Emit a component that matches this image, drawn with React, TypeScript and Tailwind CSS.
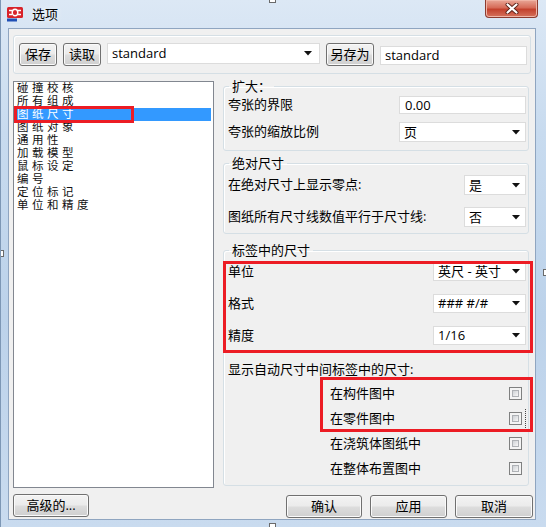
import React from "react";

const FONT = "font-[family-name:'Open_Sans','Noto_Sans_CJK_SC',sans-serif]";

function Arrow() {
  return (
    <svg width="8" height="5" viewBox="0 0 8 5" className="shrink-0">
      <polygon points="0,0 8,0 4,4.5" fill="#111" />
    </svg>
  );
}

function Btn({ children, className = "" }: { children: React.ReactNode; className?: string }) {
  return (
    <div
      className={`flex items-center justify-center h-[23px] rounded-[3px] border border-[#707070] bg-[linear-gradient(#f3f3f3,#ebebeb_48%,#dddddd_52%,#cfcfcf)] shadow-[inset_0_0_0_1px_#fafafa] text-[13px] leading-none ${className}`}
    >
      {children}
    </div>
  );
}

function Combo({ value, className = "" }: { value: string; className?: string }) {
  return (
    <div
      className={`flex items-center justify-between bg-white border border-[#dcdcdc] pl-[4px] pr-[5px] text-[13px] leading-none ${className}`}
    >
      <span>{value}</span>
      <Arrow />
    </div>
  );
}

function Check() {
  return (
    <div className="w-[13px] h-[13px] border border-[#7f8080] bg-[#f4f4f4] p-[2px] shrink-0">
      <div className="w-full h-full border border-[#aeb1b5] bg-linear-to-br from-[#cfd2d6] to-[#f7f7f7]" />
    </div>
  );
}

function Group({ title, className = "", children }: { title: string; className?: string; children: React.ReactNode }) {
  return (
    <fieldset className={`border border-[#d5dfe5] rounded-[3px] shadow-[inset_1px_1px_0_#fff] ${className}`}>
      <legend className="ml-[5px] px-[3px] text-[13px] leading-[16px]">{title}</legend>
      {children}
    </fieldset>
  );
}

function Logo() {
  return (
    <svg width="16" height="15" viewBox="0 0 16 15">
      <rect x="0" y="0" width="16" height="11" rx="1.5" fill="#d8232a" />
      <path d="M2 3.5 H5 M11 3.5 H14 M2 7.5 H5 M11 7.5 H14" stroke="#fff" strokeWidth="1.6" />
      <ellipse cx="8" cy="5.5" rx="2.8" ry="3.2" fill="none" stroke="#fff" strokeWidth="1.4" />
      <rect x="0" y="11.5" width="10" height="3" fill="#1f4fb5" />
    </svg>
  );
}

function CloseBtn() {
  return (
    <div className="self-start w-[53px] h-[18px] rounded-b-[4px] border border-t-0 border-[#8c3b2f] bg-[linear-gradient(#e9a797,#d66b58_45%,#c3412d_55%,#d5725c)] flex items-center justify-center shadow-[inset_0_0_0_1px_#f0b5a6]">
      <svg width="14" height="11" viewBox="0 0 14 11">
        <path d="M2.5 1.5 L11.5 9.5 M11.5 1.5 L2.5 9.5" stroke="#5a2218" strokeWidth="4" strokeLinecap="round" />
        <path d="M2.5 1.5 L11.5 9.5 M11.5 1.5 L2.5 9.5" stroke="#fff" strokeWidth="2.2" strokeLinecap="round" />
      </svg>
    </div>
  );
}

const items = ["碰撞校核", "所有组成", "图纸尺寸", "图纸对象", "通用性", "加载模型", "鼠标设定", "编号", "定位标记", "单位和精度"];

export default function App() {
  return (
    <div
      className={`relative w-[546px] h-[527px] overflow-hidden border-l border-[#7d97b5] bg-[linear-gradient(180deg,#dce8f5_0%,#c8dbef_25%,#bcd2ea_60%,#c9dbef_100%)] text-black ${FONT}`}
    >
      {/* title bar */}
      <div className="h-[28px] flex items-center pl-[6px] pr-[8px]">
        <Logo />
        <span className="ml-[9px] text-[13px] leading-none [text-shadow:0_0_6px_#fff]">选项</span>
        <div className="flex-1" />
        <CloseBtn />
      </div>

      {/* client area */}
      <div className="ml-[7px] w-[528px] h-[492px] border border-[#8fa5c0] bg-[#f0f0f0] flex flex-col pl-[4px] pr-[2px]">
        {/* top toolbar group */}
        <div className="mt-[6px] w-[518px] h-[39px] border border-[#d5dfe5] rounded-[3px] shadow-[inset_1px_1px_0_#fff] flex items-center pl-[5px] gap-[6px]">
          <Btn className="w-[38px]">保存</Btn>
          <Btn className="w-[38px]">读取</Btn>
          <Combo value="standard" className="w-[213px] h-[21px] -mt-[2px] pr-[7px]" />
          <Btn className="w-[48px]">另存为</Btn>
          <div className="w-[147px] h-[19px] mt-[2px] bg-white border border-[#dcdcdc] pl-[4px] flex items-center text-[13px] leading-none">
            standard
          </div>
        </div>

        {/* middle */}
        <div className="mt-[4px] flex items-start">
          {/* list */}
          <div className="mt-[3px] w-[201px] h-[407px] border border-[#828790] bg-white pr-[2px] font-[family-name:'Liberation_Sans','Noto_Sans_CJK_SC',sans-serif] text-[11.5px] leading-[13px] tracking-[3.5px]">
            {items.map((t, i) => (
              <div key={t} className={`pl-[3px] h-[13px] ${i === 2 ? "bg-[#3399ff] text-white" : "text-[#111]"}`}>
                {t}
              </div>
            ))}
          </div>

          {/* right column */}
          <div className="ml-[9px] w-[306px] flex flex-col">
            <Group title="扩大：" className="h-[73px]">
              <div className="pl-[4px] pr-[2px] pt-[2px] flex flex-col gap-[8px] text-[13px]">
                <div className="flex items-center justify-between h-[18px]">
                  <span>夸张的界限</span>
                  <div className="w-[127px] h-[18px] bg-white border border-[#dcdcdc] pl-[5px] flex items-center leading-none">0.00</div>
                </div>
                <div className="flex items-center justify-between h-[20px]">
                  <span>夸张的缩放比例</span>
                  <Combo value="页" className="w-[127px] h-[20px]" />
                </div>
              </div>
            </Group>

            <Group title="绝对尺寸" className="mt-[4px] h-[79px]">
              <div className="pl-[4px] pr-[2px] pt-[4px] flex flex-col gap-[12px] text-[13px]">
                <div className="flex items-center justify-between h-[20px]">
                  <span>在绝对尺寸上显示零点:</span>
                  <Combo value="是" className="w-[62px] h-[20px]" />
                </div>
                <div className="flex items-center justify-between h-[20px]">
                  <span>图纸所有尺寸线数值平行于尺寸线:</span>
                  <Combo value="否" className="w-[62px] h-[20px]" />
                </div>
              </div>
            </Group>

            <Group title="标签中的尺寸" className="mt-[8px] h-[244px]">
              <div className="pl-[4px] pr-[2px] pt-[4px] flex flex-col text-[13px]">
                <div className="flex flex-col gap-[13px]">
                  <div className="flex items-center justify-between h-[19px]">
                    <span>单位</span>
                    <Combo value="英尺 - 英寸" className="w-[93px] h-[19px]" />
                  </div>
                  <div className="flex items-center justify-between h-[19px]">
                    <span>格式</span>
                    <Combo value="### #/#" className="w-[93px] h-[19px]" />
                  </div>
                  <div className="flex items-center justify-between h-[19px]">
                    <span>精度</span>
                    <Combo value="1/16" className="w-[93px] h-[19px]" />
                  </div>
                </div>
                <div className="mt-[16px] leading-[16px]">显示自动尺寸中间标签中的尺寸:</div>
                <div className="mt-[4px] flex flex-col pl-[102px] pr-[4px]">
                  {["在构件图中", "在零件图中", "在浇筑体图纸中", "在整体布置图中"].map((t, i) => (
                    <div key={t} className="h-[25px] flex items-center justify-between">
                      <span>{t}</span>
                      <div className="relative">
                        <Check />
                        {i === 1 && (
                          <div className="absolute left-[16px] -top-[3px] h-[19px] border-l border-dotted border-[#444]" />
                        )}
                      </div>
                    </div>
                  ))}
                </div>
              </div>
            </Group>
          </div>
        </div>

        {/* bottom buttons */}
        <div className="mt-[6px] flex items-start justify-between">
          <Btn className="w-[76px]">高级的...</Btn>
          <div className="flex gap-[8px] mt-[1px]">
            <Btn className="w-[76px]">确认</Btn>
            <Btn className="w-[77px]">应用</Btn>
            <Btn className="w-[78px]">取消</Btn>
          </div>
        </div>
      </div>

      {/* red annotation frames */}
      <div className="absolute left-[13px] top-[106px] w-[120px] h-[17px] border-[3px] border-[#ec1c24]" />
      <div className="absolute left-[222px] top-[261px] w-[310px] h-[92px] border-[3px] border-[#ec1c24]" />
      <div className="absolute left-[319px] top-[377px] w-[213px] h-[55px] border-[3px] border-[#ec1c24]" />

      {/* selection handles */}
      <div className="absolute left-[268px] -top-[4px] w-[7px] h-[7px] border border-[#6a6a6a] bg-white" />
      <div className="absolute left-[268px] top-[523px] w-[7px] h-[7px] border border-[#6a6a6a] bg-white" />
      <div className="absolute -left-[4px] top-[250px] w-[7px] h-[7px] border border-[#6a6a6a] bg-white" />
      <div className="absolute left-[542px] top-[269px] w-[7px] h-[7px] border border-[#6a6a6a] bg-white" />
    </div>
  );
}
